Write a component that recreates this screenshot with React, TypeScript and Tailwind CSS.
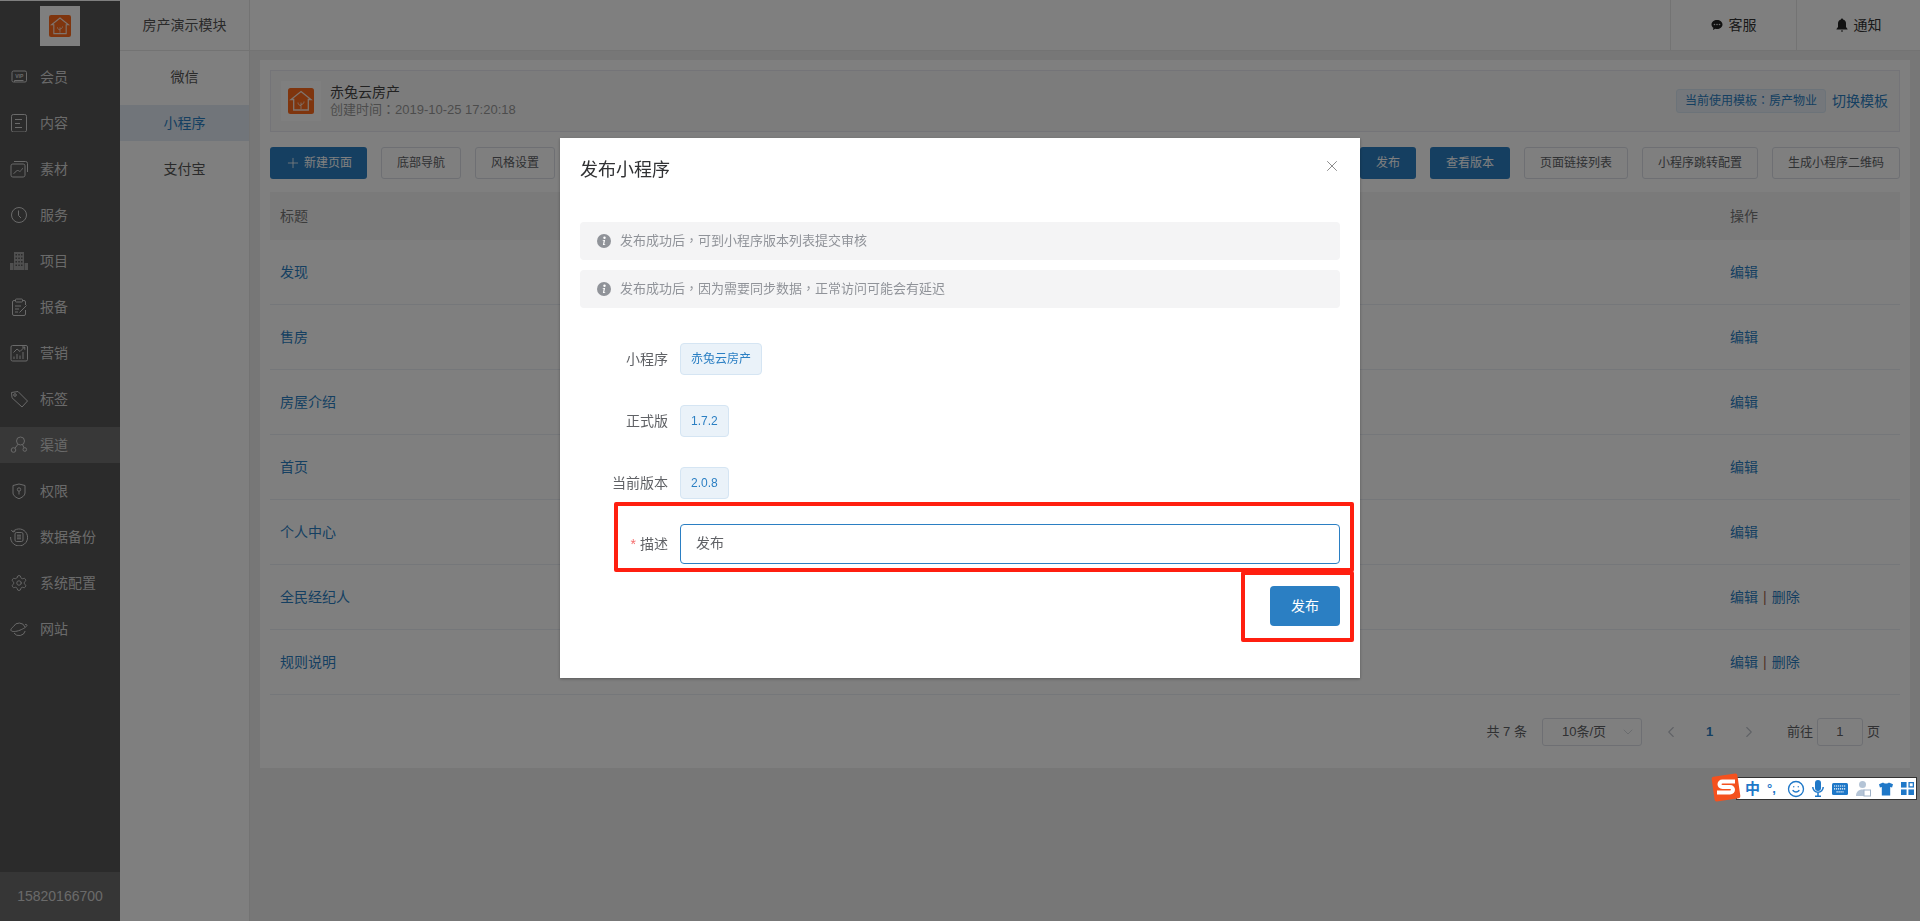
import { ReactNode } from 'react';
import { ChevronDown, ChevronLeft, ChevronRight, Plus, Settings, Smile, X } from 'lucide-react';

const svgProps = {
  width: 18,
  height: 18,
  viewBox: '0 0 18 18',
  fill: 'none',
  stroke: 'currentColor',
  strokeWidth: 1,
};

// sidebar icons
const icons: Record<string, ReactNode> = {
  vip: (
    <svg {...svgProps}>
      <rect x="2" y="3" width="14.5" height="11" rx="1.5" />
      <path d="M4.5 13.8v-1.3h9" />
      <text x="9.2" y="10" fontSize="5" fontWeight="700" textAnchor="middle" fill="currentColor" stroke="none">VIP</text>
    </svg>
  ),
  doc: (
    <svg {...svgProps}>
      <rect x="1.5" y="0.5" width="15" height="17.500" rx="1.8" />
      <path d="M5 5.5h7M5 9.500h5M5 13.500h7" />
    </svg>
  ),
  media: (
    <svg {...svgProps}>
      <rect x="1" y="4" width="14" height="13" rx="1.8" />
      <path d="M4 1.5h11.5A2 2 0 0 1 17.5 3.5V12M3.5 13.5c2-.3 2-3 4-3s1.500 1.500 3 .5 1.500-2.500 2.500-3" />
    </svg>
  ),
  clock: (
    <svg {...svgProps}>
      <circle cx="9" cy="9" r="7.500" />
      <path d="M8.500 4.500V9.500l2.500 2.500" />
    </svg>
  ),
  building: (
    <svg {...svgProps} stroke="none" fill="currentColor">
      <path d="M4 0h10v18H4zM0 11h3.500v7H0zM14.500 11H18v7h-3.500z" opacity=".6" />
      <path d="M5.500 2h1.500v1.500H5.500zM8.300 2h1.500v1.500H8.300zM11 2h1.500v1.500H11zM5.500 5.500h1.500V7H5.500zM8.300 5.500h1.500V7H8.300zM11 5.500h1.500V7H11zM5.500 9h1.500v1.500H5.500zM8.300 9h1.500v1.500H8.300zM11 9h1.500v1.500H11zM5.500 12.500h1.500V14H5.500zM8.300 12.500h1.500V14H8.300zM11 12.500h1.500V14H11z" fill="#565656" />
    </svg>
  ),
  report: (
    <svg {...svgProps}>
      <path d="M5.500 2.500H4A1.500 1.500 0 0 0 2.500 4v12A1.500 1.500 0 0 0 4 17.500h10a1.500 1.500 0 0 0 1.500-1.500v-4M12.500 2.500H14A1.500 1.500 0 0 1 15.500 4v3" />
      <rect x="5.500" y="1" width="7" height="3" rx=".8" />
      <path d="M5 8h6M5 11h4M5 14h3M9.500 14.500l7-7" />
    </svg>
  ),
  chart: (
    <svg {...svgProps}>
      <rect x="1" y="1.500" width="16.500" height="15.500" rx="1.500" />
      <path d="M4 15v-2.500M7 15V10M10 15v-3.500M13 15V8M3.500 8.500 7 5l3 2.500L14.500 3M12 3h2.800v2.800" />
    </svg>
  ),
  tag: (
    <svg {...svgProps}>
      <path d="M1.500 2.500 8 1.500 17.500 11 12 17 2 7.800z" />
      <circle cx="5" cy="5" r="1.300" />
    </svg>
  ),
  channel: (
    <svg {...svgProps}>
      <circle cx="10.500" cy="5" r="4" />
      <circle cx="3.500" cy="14" r="2.300" />
      <circle cx="14.800" cy="13.500" r="1.800" />
      <path d="M8 8.200 5 12.200M12.500 8.500l1.500 3.300" />
    </svg>
  ),
  shield: (
    <svg {...svgProps}>
      <path d="M9 2 15 3.500V11c0 2.800-3.500 4.800-6 5.700C6.500 15.800 3 13.800 3 11V3.500z" />
      <circle cx="9" cy="7.500" r="1.700" />
      <path d="M9 9.200V12.500" />
    </svg>
  ),
  backup: (
    <svg {...svgProps}>
      <path d="M3.200 3.300A8.500 8.500 0 1 1 .6 9M1.300 2l1.700 2 2.200-1" />
      <rect x="5" y="4.500" width="8" height="9" rx="1.500" />
      <path d="M7 7.200h4M7 9h4M7 10.800h4" />
    </svg>
  ),
  planet: (
    <svg {...svgProps}>
      <path d="M3.500 6.500A6.300 6.300 0 0 1 15 7M15.200 11A6.300 6.300 0 0 1 4 13" />
      <path d="M3.500 6.500C1.500 8 .5 9.500 1 10.500c.8 1.500 5 1.300 9-.3 3.500-1.500 7-3.500 7-5 0-.6-.7-.9-2-.7" />
    </svg>
  ),
};

const menu = [
  { label: '会员', icon: icons.vip },
  { label: '内容', icon: icons.doc },
  { label: '素材', icon: icons.media },
  { label: '服务', icon: icons.clock },
  { label: '项目', icon: icons.building },
  { label: '报备', icon: icons.report },
  { label: '营销', icon: icons.chart },
  { label: '标签', icon: icons.tag },
  { label: '渠道', icon: icons.channel, active: true },
  { label: '权限', icon: icons.shield },
  { label: '数据备份', icon: icons.backup },
  { label: '系统配置', icon: <Settings size={20} strokeWidth={1.2} /> },
  { label: '网站', icon: icons.planet },
];

const pages = [
  { title: '发现' },
  { title: '售房' },
  { title: '房屋介绍' },
  { title: '首页' },
  { title: '个人中心' },
  { title: '全民经纪人', removable: true },
  { title: '规则说明', removable: true },
];

function HouseLogo({ size }: { size: number }) {
  return (
    <svg width={size} height={size} viewBox="0 0 26 26">
      <rect width="26" height="26" rx="2.500" fill="#ff6a1c" />
      <path d="M13 3.500 23 11.500H20.300V22H5.700V11.500H3z" fill="none" stroke="#fff" strokeWidth="1.300" opacity=".85" />
      <path d="M13 21v-6.500M13 17.500c-1.800 0-3-1.200-3-3M13 16.500c1.800 0 3-1.200 3-3" fill="none" stroke="#fff" strokeWidth="1" opacity=".7" />
    </svg>
  );
}

function OutlineButton({ children }: { children: ReactNode }) {
  return (
    <button className="h-[32px] px-[15px] rounded-[3px] border border-[#dcdfe6] bg-white text-[12px] text-[#606266]">
      {children}
    </button>
  );
}

function PrimaryButton({ children, className = '' }: { children: ReactNode; className?: string }) {
  return (
    <button className={`h-[32px] rounded-[3px] bg-[#2b7fc3] text-[12px] text-white ${className}`}>
      {children}
    </button>
  );
}

function FormRow({ label, value }: { label: string; value: string }) {
  return (
    <div className="flex items-center h-[32px] mb-[30px]">
      <span className="w-[100px] pr-[12px] text-right text-[14px] text-[#606266]">{label}</span>
      <span className="h-[32px] px-[10px] flex items-center rounded-[4px] border border-[#d5e5f3] bg-[#eaf2f9] text-[12px] text-[#2b7fc3]">
        {value}
      </span>
    </div>
  );
}

function Alert({ children }: { children: string }) {
  return (
    <div className="h-[38px] flex items-center gap-[9px] px-[17px] rounded-[4px] bg-[#f4f4f5] text-[13px] text-[#909399] font-['Liberation_Sans','Noto_Sans_CJK_TC',sans-serif]">
      <svg width="14" height="14" viewBox="0 0 14 14" className="shrink-0">
        <circle cx="7" cy="7" r="7" fill="#909399" />
        <circle cx="7.500" cy="3.700" r="1.200" fill="#fff" />
        <path d="M5.800 6h2.300L7.200 10.300h1v.8H5.900L6.700 6.800h-1z" fill="#fff" />
      </svg>
      <span>{children}</span>
    </div>
  );
}

function SogouBar() {
  return (
    <div className="absolute right-[3px] top-[777px] z-50 h-[23px] w-[181px] flex items-center border border-[#333] bg-white">
      <svg width="30" height="29" viewBox="0 0 30 29" className="absolute left-[-26px] top-[-5px]">
        <rect x="2" y="2" width="26" height="25" rx="2" fill="#f4511e" transform="rotate(-8 15 14.500)" />
        <path d="M24 8.500H11.500c-4 0-4 5.500 0 5.500h7.500c4 0 4 5.500 0 5.500H6" fill="none" stroke="#fff" strokeWidth="4" />
      </svg>
      <div className="flex items-center pl-[8px] gap-[8px] text-[#1f78c8]">
        <span className="w-[14px] text-[15px] font-bold leading-none">中</span>
        <span className="w-[13px] text-[13px] font-bold leading-none">°,</span>
        <Smile size={18} strokeWidth={1.800} className="mx-[-1px]" />
        <svg width="12" height="17" viewBox="0 0 12 17" fill="none" stroke="#1f78c8" strokeWidth="1.500">
          <rect x="3" width="6" height="11" rx="3" fill="#1f78c8" stroke="none" />
          <path d="M.8 7a5.200 5.200 0 0 0 10.400 0M6 12.500V16M3 16.300h6" />
        </svg>
        <svg width="16" height="13" viewBox="0 0 16 13">
          <rect width="16" height="12" y="1" rx="1.500" fill="#1f78c8" />
          <path d="M2 4h12M2 6.800h12M4.500 9.800h7" stroke="#fff" strokeWidth="1.200" strokeDasharray="1.200 .8" />
        </svg>
        <svg width="15" height="17" viewBox="0 0 15 17" fill="#b4c4d6">
          <circle cx="6.500" cy="4.500" r="3.500" />
          <path d="M0 16c0-4 2.500-6.500 6.500-6.500S13 12 13 16z" />
          <rect x="8" y="10" width="6.500" height="6" fill="#fff" stroke="#9fb2c7" />
        </svg>
        <svg width="14" height="14" viewBox="0 0 15 14" fill="#1f78c8">
          <path d="M4.500 0C5 1.500 10 1.500 10.500 0L15 2l-1 3.500-2-.7V14H3V4.800l-2 .7L0 2z" />
        </svg>
        <svg width="13" height="13" viewBox="0 0 14 14" fill="#1f78c8">
          <rect width="6" height="6" />
          <rect x="8.700" y=".7" width="4.600" height="4.600" fill="none" stroke="#1f78c8" strokeWidth="1.400" />
          <rect y="8" width="6" height="6" />
          <rect x="8" y="8" width="6" height="6" />
        </svg>
      </div>
    </div>
  );
}

function PublishDialog() {
  return (
    <div className="fixed inset-0 z-40 bg-black/50 flex justify-center items-start pt-[138px]">
      <div className="relative w-[800px] h-[540px] bg-white shadow-[0_1px_3px_rgba(0,0,0,0.3)]">
        <div className="h-[64px] px-[20px] flex items-center justify-between">
          <h2 className="text-[18px] text-[#303133]">发布小程序</h2>
          <X size={18} strokeWidth={1} className="text-[#666666] mt-[-8px] mr-[-1px]" />
        </div>
        <div className="px-[20px] pt-[20px]">
          <div className="flex flex-col gap-[10px] mb-[35px]">
            <Alert>发布成功后，可到小程序版本列表提交审核</Alert>
            <Alert>发布成功后，因为需要同步数据，正常访问可能会有延迟</Alert>
          </div>
          <FormRow label="小程序" value="赤兔云房产" />
          <FormRow label="正式版" value="1.7.2" />
          <FormRow label="当前版本" value="2.0.8" />
          <div className="flex items-center mt-[-5px]">
            <span className="w-[100px] pr-[12px] text-right text-[14px] text-[#606266]">
              <span className="text-[#f56c6c] mr-[4px]">*</span>描述
            </span>
            <input
              readOnly
              value="发布"
              className="flex-1 h-[40px] px-[15px] pb-[4px] rounded-[4px] border border-[#2b7fc3] text-[14px] text-[#606266] outline-none"
            />
          </div>
          <div className="flex justify-end mt-[22px]">
            <button className="w-[70px] h-[40px] rounded-[4px] bg-[#2b7fc3] text-[14px] text-white">发布</button>
          </div>
        </div>
        {/* 标注框 */}
        <div className="absolute left-[54px] top-[364px] w-[740px] h-[70px] rounded-[2px] border-[4px] border-[#ff1f10]" />
        <div className="absolute left-[681px] top-[433px] w-[113px] h-[71px] rounded-[2px] border-[4px] border-[#ff1f10]" />
      </div>
    </div>
  );
}

export default function App() {
  return (
    <div className="relative flex w-full h-[921px] overflow-hidden font-['Liberation_Sans','Noto_Sans_CJK_SC',sans-serif]">
      <aside className="w-[120px] shrink-0 flex flex-col border-t border-white bg-[#565656] text-[#d4d4d4]">
        <div className="h-[58px] shrink-0 flex justify-center pt-[5px]">
          <div className="w-[40px] h-[40px] bg-white flex items-center justify-center">
            <HouseLogo size={22} />
          </div>
        </div>
        <nav className="flex-1">
          {menu.map(item => (
            <div
              key={item.label}
              className={`h-[36px] mb-[10px] flex items-center pl-[10px] gap-[12px] text-[14px] ${item.active ? 'bg-[#717171]' : ''}`}
            >
              <span className="w-[18px] h-[18px] flex items-center justify-center">{item.icon}</span>
              <span>{item.label}</span>
            </div>
          ))}
        </nav>
        <div className="h-[49px] shrink-0 bg-[#6c6c6c] flex items-center justify-center text-[14px]">15820166700</div>
      </aside>

      <div className="flex-1 flex flex-col min-w-0">
        <header className="h-[51px] shrink-0 flex border-b border-[#e6e6e6] bg-white text-[14px] text-[#333]">
          <div className="w-[130px] flex items-center justify-center border-r border-[#e6e6e6] text-[#555]">房产演示模块</div>
          <div className="flex-1" />
          <div className="w-[126px] flex items-center justify-center gap-[6px] border-l border-[#e6e6e6]">
            <svg width="12" height="12" viewBox="0 0 12 12" fill="#222">
              <path d="M6 1c3 0 5.500 2 5.500 4.500S9 10 6 10c-.6 0-1.200-.1-1.700-.2L2 11l.4-2.200C1.200 8 .5 6.800.5 5.500.5 3 3 1 6 1z" />
              <circle cx="3.500" cy="5.500" r=".8" fill="#ddd" />
              <circle cx="6" cy="5.500" r=".8" fill="#ddd" />
              <circle cx="8.500" cy="5.500" r=".8" fill="#ddd" />
            </svg>
            <span>客服</span>
          </div>
          <div className="w-[124px] flex items-center justify-center gap-[6px] border-l border-[#e6e6e6]">
            <svg width="12" height="14" viewBox="0 0 12 14" fill="#222">
              <path d="M6 .5c.6 0 1 .4 1 1 2 .5 3 2 3 4V9l1.500 2v.5H.5V11L2 9V5.500c0-2 1-3.500 3-4 0-.6.4-1 1-1z" />
              <path d="M5 12.500h2V13.500H5z" />
            </svg>
            <span>通知</span>
          </div>
        </header>

        <div className="flex-1 flex min-h-0">
          <nav className="w-[130px] shrink-0 pt-[8px] bg-white border-r border-[#e6e6e6] text-[14px] text-center text-[#555]">
            <div className="h-[36px] mb-[10px] flex items-center justify-center">微信</div>
            <div className="h-[36px] mb-[10px] flex items-center justify-center bg-[#e2ebf5] text-[#2b7fc3]">小程序</div>
            <div className="h-[36px] mb-[10px] flex items-center justify-center">支付宝</div>
          </nav>

          <main className="flex-1 min-w-0 bg-[#eeeeee] pt-[9px] pl-[10px] pr-[10px]">
            <section className="h-[708px] bg-white p-[10px]">
              <div className="h-[62px] flex items-center pl-[10px] pr-[11px] border border-[#e8e8f0] bg-[#f9f9f9]">
                <div className="w-[40px] h-[40px] bg-white flex items-center justify-center">
                  <HouseLogo size={26} />
                </div>
                <div className="ml-[9px] flex-1 leading-[18px]">
                  <div className="text-[14px] text-[#444]">赤兔云房产</div>
                  <div className="text-[13px] text-[#999] font-['Liberation_Sans','Noto_Sans_CJK_TC',sans-serif]">创建时间：2019-10-25 17:20:18</div>
                </div>
                <span className="h-[24px] px-[8px] flex items-center rounded-[3px] border border-[#d9e6f2] bg-[#e8eff7] text-[12px] text-[#2b7fc3] font-['Liberation_Sans','Noto_Sans_CJK_TC',sans-serif]">
                  当前使用模板：房产物业
                </span>
                <span className="ml-[6px] text-[14px] text-[#2b7fc3]">切换模板</span>
              </div>

              <div className="flex justify-between mt-[15px] mb-[13px]">
                <div className="flex gap-[14px]">
                  <PrimaryButton className="w-[97px] flex items-center justify-center gap-[3px]">
                    <Plus size={16} strokeWidth={1.200} />
                    新建页面
                  </PrimaryButton>
                  <OutlineButton>底部导航</OutlineButton>
                  <OutlineButton>风格设置</OutlineButton>
                </div>
                <div className="flex gap-[14px]">
                  <PrimaryButton className="w-[56px]">发布</PrimaryButton>
                  <PrimaryButton className="w-[80px]">查看版本</PrimaryButton>
                  <OutlineButton>页面链接列表</OutlineButton>
                  <OutlineButton>小程序跳转配置</OutlineButton>
                  <OutlineButton>生成小程序二维码</OutlineButton>
                </div>
              </div>

              <div className="h-[48px] flex items-center justify-between bg-[#f4f4f4] pl-[10px] text-[14px] text-[#777]">
                <span>标题</span>
                <span className="w-[170px]">操作</span>
              </div>
              {pages.map(page => (
                <div key={page.title} className="h-[65px] flex items-center justify-between pl-[10px] border-b border-[#ebeef5] text-[14px] text-[#2b7fc3]">
                  <span>{page.title}</span>
                  <span className="w-[170px]">
                    编辑
                    {page.removable && (
                      <>
                        <span className="mx-[5px] text-[#a06a50]">|</span>
                        删除
                      </>
                    )}
                  </span>
                </div>
              ))}

              <div className="mt-[23px] h-[28px] flex items-center justify-end pr-[20px] text-[13px] text-[#606266]">
                <span>共 7 条</span>
                <div className="ml-[15px] w-[100px] h-[28px] flex items-center justify-between pl-[19px] pr-[5px] rounded-[3px] border border-[#dcdfe6]">
                  <span>10条/页</span>
                  <ChevronDown size={16} strokeWidth={1} className="text-[#c0c4cc]" />
                </div>
                <ChevronLeft size={18} strokeWidth={1.500} className="ml-[20px] text-[#c0c4cc]" />
                <span className="ml-[26px] w-[10px] font-bold text-[#2b7fc3]">1</span>
                <ChevronRight size={18} strokeWidth={1.500} className="ml-[24px] text-[#c0c4cc]" />
                <span className="ml-[29px]">前往</span>
                <div className="ml-[4px] w-[46px] h-[28px] flex items-center justify-center rounded-[3px] border border-[#dcdfe6]">1</div>
                <span className="ml-[4px]">页</span>
              </div>
            </section>
          </main>
        </div>
      </div>

      <PublishDialog />
      <SogouBar />
    </div>
  );
}
